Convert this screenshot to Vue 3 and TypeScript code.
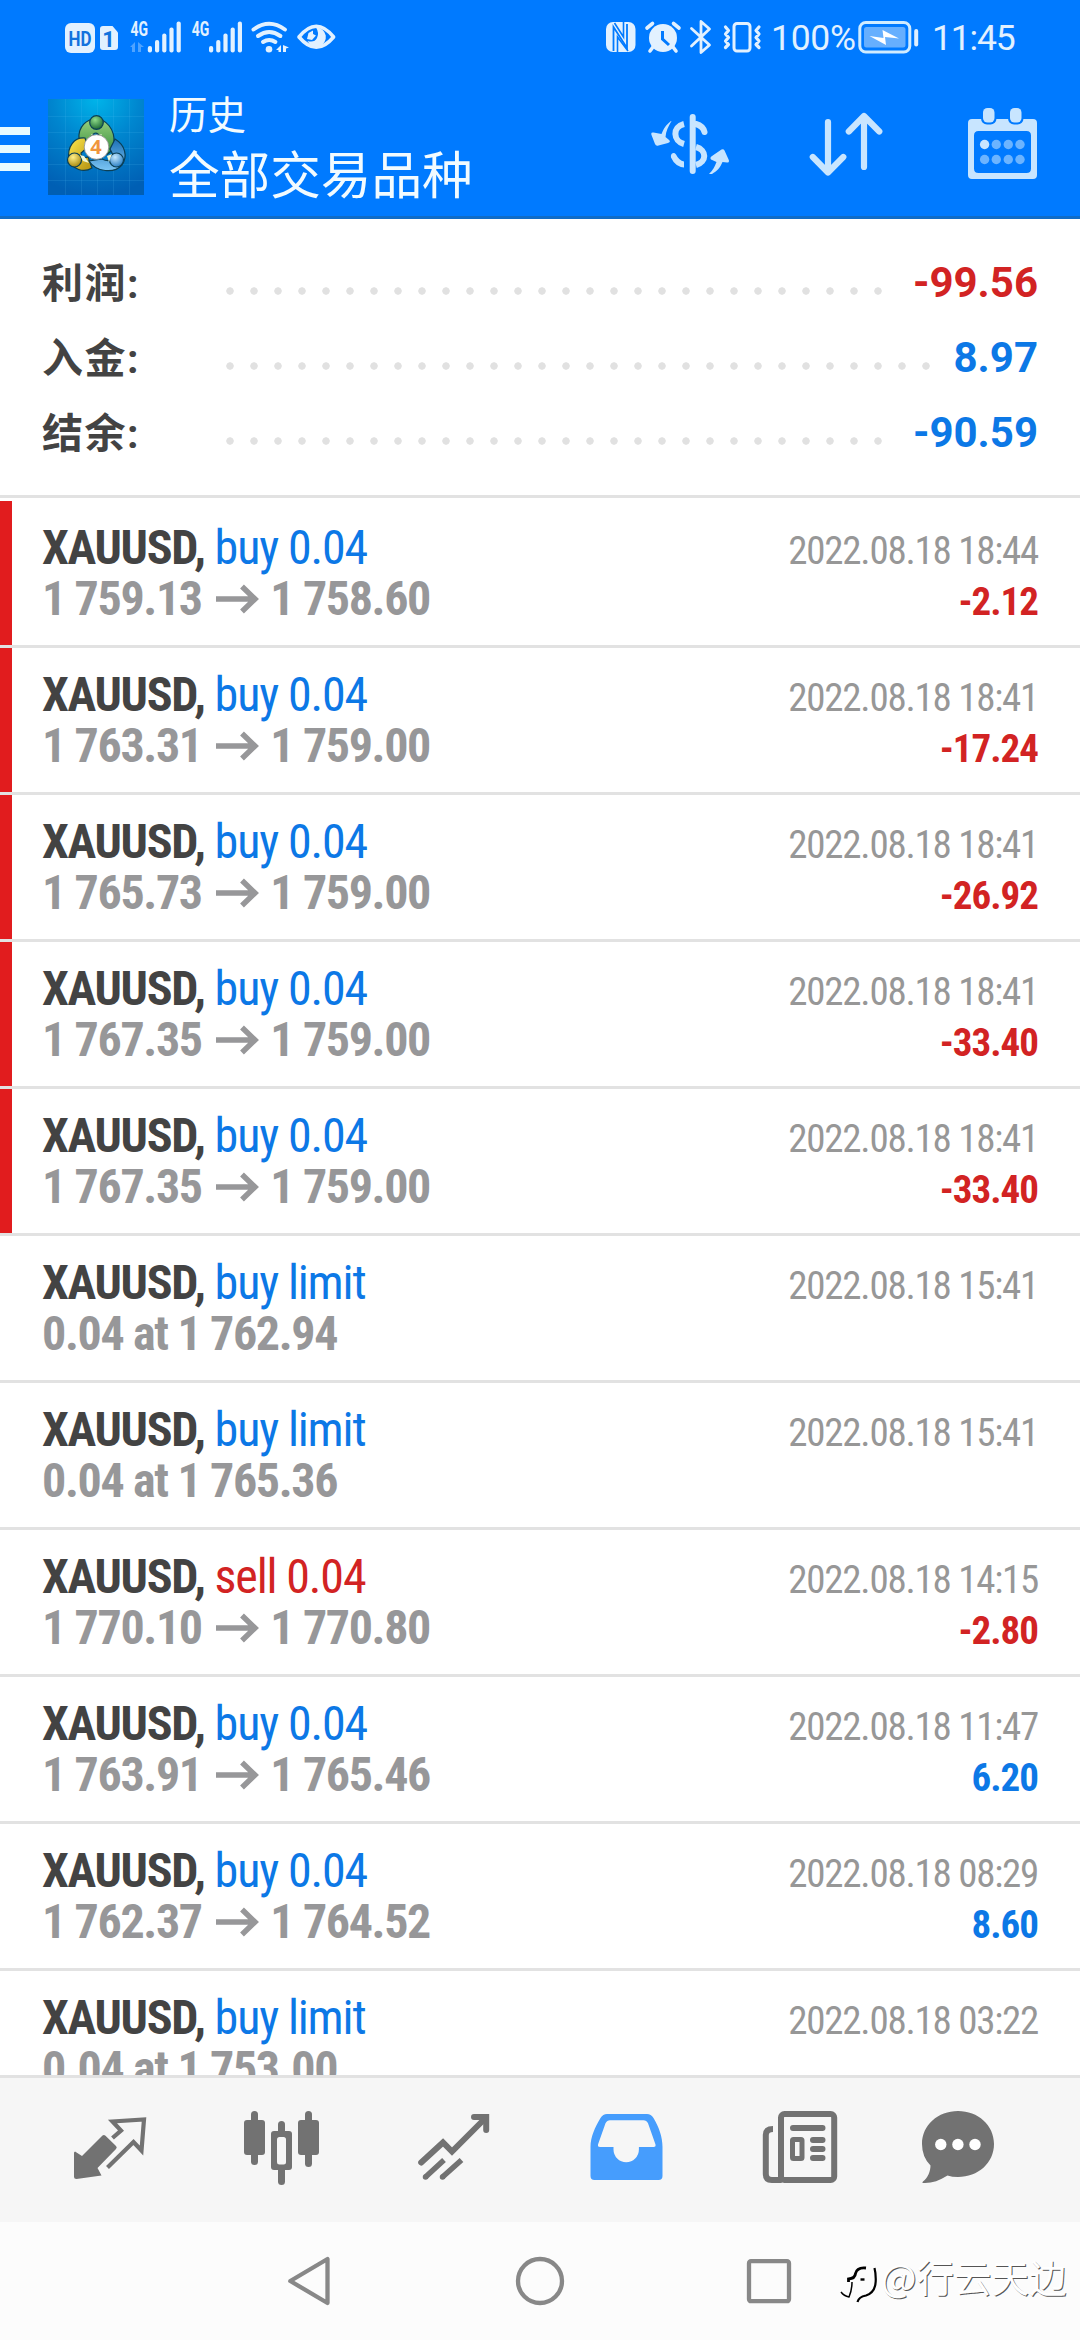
<script setup lang="ts">
interface SummaryLine {
  label: string
  value: string
  tone: 'red' | 'blue'
  dots: number
}

interface Deal {
  action: string
  side: 'red' | 'blue'
  from: string
  to?: string
  time: string
  profit?: string
  tone?: 'red' | 'blue'
  flagged?: boolean
}

const DOT_PITCH = 24

const summary: SummaryLine[] = [
  { label: '利润:', value: '-99.56', tone: 'red', dots: 28 },
  { label: '入金:', value: '8.97', tone: 'blue', dots: 30 },
  { label: '结余:', value: '-90.59', tone: 'blue', dots: 28 },
]

const deals: Deal[] = [
  { action: 'buy 0.04', side: 'blue', from: '1 759.13', to: '1 758.60', time: '2022.08.18 18:44', profit: '-2.12', tone: 'red', flagged: true },
  { action: 'buy 0.04', side: 'blue', from: '1 763.31', to: '1 759.00', time: '2022.08.18 18:41', profit: '-17.24', tone: 'red', flagged: true },
  { action: 'buy 0.04', side: 'blue', from: '1 765.73', to: '1 759.00', time: '2022.08.18 18:41', profit: '-26.92', tone: 'red', flagged: true },
  { action: 'buy 0.04', side: 'blue', from: '1 767.35', to: '1 759.00', time: '2022.08.18 18:41', profit: '-33.40', tone: 'red', flagged: true },
  { action: 'buy 0.04', side: 'blue', from: '1 767.35', to: '1 759.00', time: '2022.08.18 18:41', profit: '-33.40', tone: 'red', flagged: true },
  { action: 'buy limit', side: 'blue', from: '0.04 at 1 762.94', time: '2022.08.18 15:41' },
  { action: 'buy limit', side: 'blue', from: '0.04 at 1 765.36', time: '2022.08.18 15:41' },
  { action: 'sell 0.04', side: 'red', from: '1 770.10', to: '1 770.80', time: '2022.08.18 14:15', profit: '-2.80', tone: 'red' },
  { action: 'buy 0.04', side: 'blue', from: '1 763.91', to: '1 765.46', time: '2022.08.18 11:47', profit: '6.20', tone: 'blue' },
  { action: 'buy 0.04', side: 'blue', from: '1 762.37', to: '1 764.52', time: '2022.08.18 08:29', profit: '8.60', tone: 'blue' },
  { action: 'buy limit', side: 'blue', from: '0.04 at 1 753.00', time: '2022.08.18 03:22' },
]

const bars = [0, 1, 2, 3, 4]
const barTops = [46, 40, 33.5, 27.5, 21.5]
</script>

<template>
  <div class="screen">
    <header class="top">
      <div class="status">
        <svg class="status-left" width="276" height="40" viewBox="62 18 276 40" fill="#e2f1ff">
          <rect x="65" y="23" width="30" height="30" rx="6" />
          <text x="80" y="46" class="st-hd" text-anchor="middle" textLength="23" lengthAdjust="spacingAndGlyphs">HD</text>
          <path d="M103 26h9.500l5.500 6.500V47q0 3-3 3h-12q-3 0-3-3V29q0-3 3-3z" />
          <text x="108.500" y="46.500" class="st-sim" text-anchor="middle">1</text>
          <text x="130.500" y="35.500" class="st-g" textLength="17.500" lengthAdjust="spacingAndGlyphs">4G</text>
          <path opacity=".35" d="M130 47l5-5v10h-3v-5zM138 42l6 5-3 0v5h-3z" />
          <rect v-for="i in bars" :key="'a' + i" :x="147.800 + i * 7.200" :y="barTops[i]" width="4.200" :height="52.500 - barTops[i]" rx="2" />
          <text x="191.800" y="35.500" class="st-g" textLength="17.500" lengthAdjust="spacingAndGlyphs">4G</text>
          <rect v-for="i in bars" :key="'b' + i" :x="209 + i * 7.200" :y="barTops[i]" width="4.200" :height="52.500 - barTops[i]" rx="2" />
          <g fill="none" stroke="#e2f1ff" stroke-width="4" stroke-linecap="round">
            <path d="M253.500 29.500q15.700-11.500 31.400 0" />
            <path d="M258 36q11.200-8 22.400 0" />
            <path d="M263 42q6.200-4 12.400 0" />
          </g>
          <circle cx="269" cy="49.200" r="3.300" />
          <path d="M276 50l5-5v7h-2.500v-2zM283 45l6 2.500-3 1v3.500h-3z" />
          <path d="M299 37q17.300-21.500 34.600 0q-17.300 20.500-34.600 0z" fill="none" stroke="#e2f1ff" stroke-width="3.600" stroke-linejoin="round" />
          <path d="M316 27.500a9.600 9.600 0 1 1-8.500 13.500q7 2 9.500-3t-1-10.500z" />
          <path d="M308.500 33l4.500-2.500 0 3.500 3 1.500-4 4.500-5-1z" />
        </svg>
        <div class="status-right">
          <svg width="160" height="40" viewBox="604 18 160 40" fill="#e2f1ff">
            <rect x="606" y="22" width="29.500" height="30" rx="7" />
            <path d="M613.500 51V27l13.500 21V24" fill="none" stroke="#007aff" stroke-width="1.800" />
            <path d="M617.500 52V37l10.500 14M623.500 22V37l-9-14" fill="none" stroke="#007aff" stroke-width="1.600" />
            <circle cx="663" cy="38" r="14" />
            <path d="M647 28l5.500-4.500M679 28l-5.500-4.500M653 47l-3 4M673 47l3 4" stroke="#e2f1ff" stroke-width="3.600" stroke-linecap="round" />
            <path d="M662.500 31v8l6.500 6" fill="none" stroke="#007aff" stroke-width="3" />
            <path d="M691.500 28.500L709.500 45l-8.500 7.500v-31l8.500 7.500-18 17" fill="none" stroke="#e2f1ff" stroke-width="2.800" stroke-linejoin="round" stroke-linecap="round" />
            <rect x="734" y="23.500" width="16" height="27.500" rx="3" fill="none" stroke="#e2f1ff" stroke-width="3" />
            <path d="M725.500 27l3 3.500-3 3.500 3 3.500-3 3.500 3 3.500-3 3M759 27l-3 3.500 3 3.500-3 3.500 3 3.500-3 3.500 3 3" fill="none" stroke="#e2f1ff" stroke-width="3.200" stroke-linejoin="round" stroke-linecap="round" />
          </svg>
          <span class="st-text pct">100%</span>
          <svg class="battery" width="62" height="40" viewBox="857 18 62 40">
            <rect x="859.800" y="22.500" width="50" height="29.500" rx="6" fill="none" stroke="#d0ecff" stroke-width="3" />
            <rect x="864" y="27" width="41.500" height="20.500" rx="2.500" fill="#66affe" />
            <path d="M869.500 36l14 2-1-8 16.500 8.500-14-1.500 1 8z" fill="#fff" />
            <path d="M916.200 31v13.500" stroke="#e2f1ff" stroke-width="4" stroke-linecap="round" />
          </svg>
          <span class="st-text clock">11:45</span>
        </div>
      </div>
      <div class="appbar">
        <svg class="menu" width="30" height="44" viewBox="0 0 30 44" fill="#e8fbff">
          <rect width="30" height="8" />
          <rect y="18" width="30" height="8" />
          <rect y="36" width="30" height="8" />
        </svg>
        <svg class="logo" width="96" height="96" viewBox="0 0 96 96">
          <defs>
            <radialGradient id="lbg" cx=".5" cy="0" r="1">
              <stop offset="0" stop-color="#00b4ea" />
              <stop offset=".45" stop-color="#0086cf" />
              <stop offset="1" stop-color="#005fb4" />
            </radialGradient>
            <linearGradient id="lg" x2="0" y2="1"><stop offset="0" stop-color="#9ad07e" /><stop offset="1" stop-color="#2f8b3b" /></linearGradient>
            <linearGradient id="ly" x2="1" y2="1"><stop offset="0" stop-color="#ffe84d" /><stop offset="1" stop-color="#b29010" /></linearGradient>
            <linearGradient id="lb" x2="0" y2="1"><stop offset="0" stop-color="#1c6fb5" /><stop offset="1" stop-color="#7cc6f5" /></linearGradient>
            <radialGradient id="hg" cx=".4" cy=".3" r=".7"><stop offset="0" stop-color="#8fdc8a" /><stop offset="1" stop-color="#1d6a35" /></radialGradient>
            <radialGradient id="hy" cx=".4" cy=".3" r=".7"><stop offset="0" stop-color="#fff08a" /><stop offset="1" stop-color="#a98a10" /></radialGradient>
            <radialGradient id="hb" cx=".4" cy=".3" r=".7"><stop offset="0" stop-color="#c4e8ff" /><stop offset="1" stop-color="#2a7fc4" /></radialGradient>
          </defs>
          <rect width="96" height="96" fill="url(#lbg)" />
          <path d="M17.500 0v96M33.500 0v96M49.500 0v96M65.500 0v96M81.500 0v96M0 17.500h96M0 33.500h96M0 49.500h96M0 65.500h96M0 81.500h96" stroke="#5fc8f5" stroke-opacity=".14" fill="none" />
          <g stroke="#0b3f55" stroke-width="1.200">
            <path d="M31 40C30 27 39 20 48 20C58 20 67 30 66 44C65 52 60 56 56 56L52 38Q48 30 43 38L36 46Q31 46 31 40z" fill="url(#lg)" />
            <path d="M37 39C26 38 19 48 21 60C24 71 36 74 44 69L40 58Q33 60 33 54L40 48z" fill="url(#ly)" />
            <path d="M67 40C77 46 80 57 74 66C66 75 48 73 41 62L54 60Q62 64 66 58L62 50z" fill="url(#lb)" />
            <circle cx="48.500" cy="23.500" r="6.800" fill="url(#hg)" />
            <circle cx="26.500" cy="61" r="7" fill="url(#hy)" />
            <circle cx="68.500" cy="61" r="7" fill="url(#hb)" />
          </g>
          <path d="M43 35l5 2 6-2-3 5h-5zM32 56l4 1 5 7-6-2zM59 57l5-2-3 8z" fill="#eef6d8" />
          <circle cx="48.500" cy="48" r="12.300" fill="#fff" stroke="#8d8d8d" stroke-width=".8" />
          <text x="48" y="55" text-anchor="middle" class="four">4</text>
        </svg>
        <div class="titles">
          <div class="sub">历史</div>
          <div class="main">全部交易品种</div>
        </div>
        <div class="tools">
          <svg width="78" height="60" viewBox="651 115 78 60" fill="#c8e5ff">
            <path d="M671 122C666 126 664 129 661.500 135L653.500 133.500Q650.500 133 651.500 136L655 145Q656 147.500 658.500 146.500L668 144Q671.500 143 668.500 140.500L665.500 138C666 132 668 128 671.500 122z" />
            <path d="M709 175C713 171 714.500 168 716.500 163L711 160.500Q709.500 158.500 712 157L721.500 150.500Q723.500 149.500 724.500 151.500L728.800 161Q729.500 164 727 163.500L722.500 163C720 169 717 172 712 175z" />
            <path d="M692.700 118v54" stroke="#c8e5ff" stroke-width="6" stroke-linecap="round" />
            <g fill="none" stroke="#c8e5ff" stroke-width="6">
              <path d="M684 125C672 128 673 142 684 145" />
              <path d="M696 125Q703 127 704.500 133" stroke-linecap="round" />
              <path d="M696 148C707 151 707 163 696 166" />
            </g>
            <path d="M671.500 155q2.500-2 4.500 0.500q3 6 8 7v6q-9-1-13-10q-0.500-2 0.500-3.500z" />
          </svg>
          <svg class="sort" width="74" height="64" viewBox="809 114 74 64" fill="none" stroke="#c8e5ff" stroke-width="6.200" stroke-linecap="round" stroke-linejoin="round">
            <path d="M828 124v50M812.800 159l15.200 15.500 15.300-15.500" />
            <path d="M864 169v-50M848.800 133.500l15.200-15.500 15.300 15.500" />
          </svg>
          <svg class="calendar" width="69" height="72" viewBox="968 110 69 72">
            <path d="M972 121h61q4 0 4 4v52q0 4-4 4h-61q-4 0-4-4v-52q0-4 4-4zM978.500 133q-4.500 0-4.500 4.500v33q0 4.500 4.500 4.500h48q4.500 0 4.500-4.500v-33q0-4.500-4.500-4.500z" fill="#c8e5ff" fill-rule="evenodd" />
            <rect x="981" y="108" width="15.500" height="18.500" rx="6" fill="#007aff" />
            <rect x="1008" y="108" width="15.500" height="18.500" rx="6" fill="#007aff" />
            <rect x="983" y="110" width="11.500" height="14.500" rx="4.500" fill="#c8e5ff" />
            <rect x="1010" y="110" width="11.500" height="14.500" rx="4.500" fill="#c8e5ff" />
            <g fill="#6cb4ff">
              <circle cx="984.600" cy="146.500" r="4.700" fill="#c8e5ff" />
              <circle cx="996.300" cy="146.500" r="4.700" />
              <circle cx="1008.300" cy="146.500" r="4.700" />
              <circle cx="1020" cy="146.500" r="4.700" />
              <circle cx="984.600" cy="161.500" r="4.700" />
              <circle cx="996.300" cy="161.500" r="4.700" />
              <circle cx="1008.300" cy="161.500" r="4.700" />
              <circle cx="1020" cy="161.500" r="4.700" />
            </g>
          </svg>
        </div>
      </div>
    </header>

    <section class="summary">
      <div v-for="line in summary" :key="line.label" class="sum-line">
        <span class="sum-label">{{ line.label }}</span>
        <span class="leader" :style="{ width: line.dots * DOT_PITCH + 'px' }"></span>
        <span class="sum-value" :class="line.tone">{{ line.value }}</span>
      </div>
    </section>

    <main class="list">
      <article v-for="(d, i) in deals" :key="i" class="deal" :class="{ flagged: d.flagged }">
        <div class="line">
          <span class="left"><b class="symbol">XAUUSD,</b> <span :class="d.side">{{ d.action }}</span></span>
          <span class="time">{{ d.time }}</span>
        </div>
        <div class="line">
          <span class="left price">{{ d.from }}<svg v-if="d.to" class="arrow" width="43" height="30" viewBox="0 0 43 30" fill="none" stroke="#979799" stroke-width="5.500"><path d="M0 15h39M26 2.500l13 12.500-13 12.500" /></svg>{{ d.to }}</span>
          <span v-if="d.profit" class="profit" :class="d.tone">{{ d.profit }}</span>
        </div>
      </article>
    </main>

    <nav class="tabs">
      <svg width="76" height="66" viewBox="72 2114 76 66">
        <path d="M75 2151.500L82 2156l20.500-20.500q1.500-1 3 .3L116 2146q1.500 1.500 0 3L97.500 2168l4 7.500-25 3.500q-2.500 0-2.500-2.500v-24z" fill="#727272" />
        <path d="M112.500 2138L121 2130.500l-8.500-9 31.500-2-2.500 31-8-8.500-26 25.500" fill="none" stroke="#727272" stroke-width="4.200" />
      </svg>
      <svg width="76" height="78" viewBox="244 2108 76 78" fill="#727272">
        <rect x="244" y="2120" width="21" height="35" rx="3" />
        <rect x="251" y="2111" width="7" height="54" rx="3.500" />
        <rect x="298" y="2120" width="21" height="35" rx="3" />
        <rect x="305" y="2111" width="7" height="56" rx="3.500" />
        <rect x="278" y="2121" width="7" height="64" rx="3.500" />
        <rect x="271" y="2131" width="21" height="39" rx="3" />
        <rect x="277" y="2137" width="9" height="27.500" rx="2.500" fill="#f6f6f6" />
      </svg>
      <svg width="76" height="68" viewBox="416 2113 76 68" fill="none" stroke="#727272" stroke-width="6">
        <path d="M421.200 2162.500L443 2142.500l9 9L485.500 2118" stroke-linecap="round" />
        <path d="M474 2117h12.200v13" stroke-linecap="round" />
        <path d="M425.500 2177L444 2160M442.500 2177L461.500 2160" stroke-width="5.500" />
        <path d="M425.500 2177l.1 0M442.500 2177l.1 0" stroke-linecap="round" stroke-width="5.500" />
      </svg>
      <svg width="76" height="68" viewBox="588 2113 76 68">
        <path d="M607 2114h40q4 0 6.500 4C659 2127 662.500 2137 662.500 2147v29q0 4-4 4h-64q-4 0-4-4v-29C590.500 2137 595 2127 600.500 2118q2.500-4 6.500-4zM610 2120.200q-3 0-4.500 3L598 2144.500q-.5 2.500 2 2.500H613.500v2.500a12.700 12.700 0 0 0 25.400 0V2147H653.500q2.500 0 2-2.500L648 2123.200q-1.500-3-4.500-3z" fill="#469dfd" fill-rule="evenodd" />
      </svg>
      <svg width="78" height="74" viewBox="760 2110 78 74" fill="none" stroke="#727272" stroke-width="6">
        <rect x="781" y="2114" width="53.200" height="66" rx="3.500" />
        <path d="M773 2129q-7.200 0-7.200 6v39q0 6 6 6h10" />
        <path d="M793 2128h29.500M813 2140h9.500M813 2149h9.500M813 2158h9.500" stroke-linecap="round" />
        <rect x="792.500" y="2139.500" width="9.500" height="19" rx="1" stroke-width="5" />
      </svg>
      <svg class="chat" width="74" height="74" viewBox="921 2110 74 74">
        <path d="M958 2111C978 2111 994 2125 994 2144S978 2177 958 2177Q952 2177 947.500 2175.500C939 2181 931 2183.500 923 2183Q921.500 2182.500 923 2181.500C928 2178 930.500 2171 930.500 2165.500Q922 2157 922 2144C922 2125 938 2111 958 2111z" fill="#727272" />
        <circle cx="940.800" cy="2144.500" r="5.700" fill="#fff" />
        <circle cx="957.900" cy="2144.500" r="5.700" fill="#fff" />
        <circle cx="975" cy="2144.500" r="5.700" fill="#fff" />
      </svg>
    </nav>

    <footer class="system">
      <svg width="44" height="52" viewBox="286 2255 44 52" fill="none" stroke="#888" stroke-width="4.300" stroke-linejoin="round">
        <path d="M290.300 2281L327.500 2259v44z" />
      </svg>
      <svg class="home" width="52" height="52" viewBox="514 2255 52 52" fill="none" stroke="#888" stroke-width="4.300">
        <circle cx="540" cy="2281" r="22" />
      </svg>
      <svg class="recent" width="48" height="48" viewBox="745 2257 48 48" fill="none" stroke="#888" stroke-width="4.300">
        <rect x="749" y="2261.200" width="40" height="40" rx="2" />
      </svg>
      <div class="watermark">
        <svg width="40" height="44" viewBox="839 2259 40 44" fill="none" stroke="#000">
          <path d="M874.500 2268q1.500 6 1.200 13.500-.5 11-9.700 14-7.500 1.500-8.500 6.500" stroke-width="2.200" />
          <path d="M866 2268q-9-1-10.500 5.500-.5 5-7 5.500v3" stroke-width="2.800" />
          <path d="M860.500 2279.500h4" stroke-width="2.400" />
          <path d="M852 2282q0 8-3 15-5-1-8-5" stroke-width="1.500" />
        </svg>
        <span>@行云天边</span>
      </div>
    </footer>
  </div>
</template>

<style>
body {
  margin: 0;
  background: #fff;
}
</style>

<style scoped>
.screen {
  width: 1080px;
  height: 2340px;
  display: flex;
  flex-direction: column;
  overflow: hidden;
  background: #fff;
  font-family: Roboto, "Noto Sans CJK SC", sans-serif;
}
svg {
  display: block;
  flex: none;
}
.top {
  box-sizing: border-box;
  height: 219px;
  background: #007aff;
  border-bottom: 3px solid #0f6cc8;
  flex: none;
}
.status {
  height: 58px;
  padding: 18px 66px 0 62px;
  box-sizing: border-box;
  display: flex;
  justify-content: space-between;
}
.status-right {
  display: flex;
  height: 40px;
}
.st-hd {
  font: 700 21px Roboto, sans-serif;
  fill: #1272dd;
}
.st-sim {
  font: 700 22px Roboto, sans-serif;
  fill: #1272dd;
}
.st-g {
  font: 700 20px Roboto, sans-serif;
}
.st-text {
  font-size: 35.500px;
  line-height: 40px;
  color: #e2f1ff;
  white-space: nowrap;
}
.pct {
  width: 82px;
  margin-left: 7px;
  letter-spacing: -0.300px;
}
.battery {
  margin-left: 4px;
}
.clock {
  width: 82px;
  margin-left: 13px;
  letter-spacing: -1.200px;
}
.appbar {
  display: flex;
  align-items: flex-start;
  height: 158px;
}
.menu {
  margin-top: 69px;
}
.logo {
  margin: 41px 0 0 18px;
}
.four {
  font: 700 20px "Open Sans", sans-serif;
  fill: #f0953c;
}
.titles {
  margin: 28px 0 0 25px;
  color: #f2fbff;
  font-family: "Noto Sans CJK SC", sans-serif;
  white-space: nowrap;
}
.sub {
  font-size: 38.500px;
  line-height: 52px;
}
.main {
  font-size: 50.600px;
  line-height: 69px;
}
.tools {
  display: flex;
  align-items: center;
  margin: 50px 43px 0 auto;
}
.sort {
  margin-left: 80px;
}
.calendar {
  margin-left: 85px;
}
.summary {
  box-sizing: border-box;
  height: 279px;
  padding: 26px 42px 0;
  border-bottom: 3px solid #e2e2e2;
  flex: none;
}
.sum-line {
  display: flex;
  align-items: center;
  height: 75px;
}
.sum-label {
  width: 176px;
  margin-top: 2px;
  font: 700 41px/60px Roboto, "Noto Sans CJK SC", sans-serif;
  letter-spacing: 1.500px;
  color: #434343;
}
.leader {
  height: 8px;
  margin-top: 16px;
  background: radial-gradient(circle at 12px 4px, #e1e1e1 3.400px, transparent 4px) 0 0 / 24px 8px;
}
.sum-value {
  margin-left: auto;
  font-weight: 700;
  font-size: 42px;
}
.red {
  color: #d22323;
}
.blue {
  color: #0c78e6;
}
.list {
  height: 1577px;
  flex: none;
  overflow: hidden;
  padding-top: 3px;
  box-sizing: border-box;
}
.deal {
  box-sizing: border-box;
  height: 147px;
  padding: 21px 42px 0;
  border-bottom: 3px solid #e2e2e2;
  font-family: "Roboto Condensed", Roboto, sans-serif;
  font-stretch: 75%;
}
.deal.flagged {
  background: linear-gradient(#e11c1e, #e11c1e) 0 0 / 12px 144px no-repeat;
}
.line {
  display: flex;
  align-items: baseline;
  justify-content: space-between;
  height: 51px;
  line-height: 51px;
  white-space: nowrap;
}
.left {
  font-size: 48px;
  letter-spacing: -1.150px;
}
.symbol {
  color: #434343;
  letter-spacing: -1.300px;
}
.price {
  font-weight: 700;
  color: #979799;
  letter-spacing: -1.350px;
}
.arrow {
  display: inline-block;
  margin: 0 11px 0 14.500px;
  vertical-align: 1px;
}
.time {
  font-size: 39px;
  color: #979797;
  letter-spacing: -1.250px;
}
.profit {
  font-size: 39px;
  font-weight: 700;
  letter-spacing: -1px;
}
.tabs {
  box-sizing: border-box;
  height: 147px;
  flex: none;
  padding: 0 0 6px 72px;
  border-top: 3px solid #e2e2e2;
  background: #f6f6f6;
  display: flex;
  align-items: center;
  gap: 96px;
}
.chat {
  margin-left: -13px;
}
.system {
  height: 118px;
  background: #fcfcfc;
  display: flex;
  align-items: center;
  padding-left: 286px;
}
.home {
  margin-left: 184px;
}
.recent {
  margin-left: 179px;
}
.watermark {
  display: flex;
  align-items: center;
  margin-left: 46px;
}
.watermark span {
  margin: -10px 0 0 2px;
  font: 400 37.500px/50px "Noto Sans CJK SC", sans-serif;
  color: #fff;
  text-shadow: 1px 1px 0 #555;
  white-space: nowrap;
}
</style>
